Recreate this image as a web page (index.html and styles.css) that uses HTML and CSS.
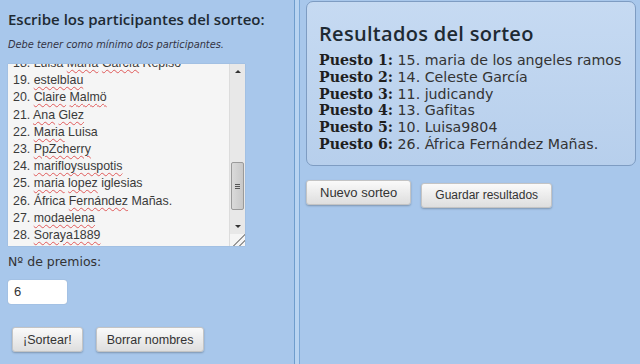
FILE: index.html
```html
<!DOCTYPE html>
<html lang="es">
<head>
<meta charset="utf-8">
<title>Sorteo</title>
<link rel="stylesheet" href="styles.css">
</head>
<body>
<div class="page">
  <div class="left">
    <h2 class="title">Escribe los participantes del sorteo:</h2>
    <p class="hint">Debe tener como mínimo dos participantes.</p>
    <div class="textarea">
      <div class="lines">
        <div class="line">18. Luisa <span class="sp">María</span> <span class="sp">García</span> Repiso</div>
        <div class="line">19. <span class="sp">estelblau</span></div>
        <div class="line">20. <span class="sp">Claire</span> <span class="sp">Malmö</span></div>
        <div class="line">21. <span class="sp">Ana</span> <span class="sp">Glez</span></div>
        <div class="line">22. <span class="sp">Maria</span> Luisa</div>
        <div class="line">23. <span class="sp">PpZcherry</span></div>
        <div class="line">24. <span class="sp">marifloysuspotis</span></div>
        <div class="line">25. <span class="sp">maria</span> <span class="sp">lopez</span> iglesias</div>
        <div class="line">26. África <span class="sp">Fernández</span> Mañas.</div>
        <div class="line">27. <span class="sp">modaelena</span></div>
        <div class="line">28. <span class="sp">Soraya1889</span></div>
      </div>
      <div class="scrollbar">
        <div class="arrow up"></div>
        <div class="track"><div class="thumb"><span class="grip"></span></div></div>
        <div class="arrow down"></div>
        <div class="resize"></div>
      </div>
    </div>
    <p class="label">Nº de premios:</p>
    <div class="input">6</div>
    <div class="buttons left-buttons">
      <button class="btn">¡Sortear!</button>
      <button class="btn">Borrar nombres</button>
    </div>
  </div>
  <div class="divider"></div>
  <div class="right">
    <div class="results">
      <h2 class="res-title">Resultados del sorteo</h2>
      <div class="res-line"><b>Puesto 1:</b> 15. maria de los angeles ramos</div>
      <div class="res-line"><b>Puesto 2:</b> 14. Celeste García</div>
      <div class="res-line"><b>Puesto 3:</b> 11. judicandy</div>
      <div class="res-line"><b>Puesto 4:</b> 13. Gafitas</div>
      <div class="res-line"><b>Puesto 5:</b> 10. Luisa9804</div>
      <div class="res-line"><b>Puesto 6:</b> 26. África Fernández Mañas.</div>
    </div>
    <div class="buttons right-buttons">
      <button class="btn btn-raised">Nuevo sorteo</button>
      <button class="btn btn-small">Guardar resultados</button>
    </div>
  </div>
</div>
</body>
</html>
```

FILE: styles.css
```css
html, body {
  margin: 0;
  padding: 0;
  background: #a8c7eb;
  height: 100%;
  overflow: hidden;
}
.page {
  display: flex;
  height: 364px;
  font-family: "DejaVu Sans", Verdana, sans-serif;
  color: #222;
}
.left {
  width: 286px;
  padding: 8px 0 0 8px;
  flex: none;
}
.title {
  margin: 0;
  font-family: "Open Sans", sans-serif;
  font-weight: 600;
  font-size: 15px;
  line-height: 22px;
  color: #1e2a33;
  white-space: nowrap;
}
.hint {
  margin: 8px 0 0 0;
  font-style: italic;
  font-size: 9.8px;
  line-height: 14px;
  color: #334;
}
.textarea {
  margin-top: 12px;
  width: 237px;
  height: 182px;
  background: #f5f5f5;
  display: flex;
  overflow: hidden;
  box-shadow: 0 0 1px rgba(0,0,0,0.2);
}
.lines {
  flex: 1;
  overflow: hidden;
  padding-left: 5px;
  font-family: "Liberation Sans", Arial, sans-serif;
  font-size: 12.4px;
  line-height: 17.2px;
  color: #3a3a3a;
  white-space: nowrap;
}
.lines .line:first-child {
  margin-top: -9px;
}
.sp {
  text-decoration: underline wavy #e05a5a;
  text-decoration-thickness: 1px;
  text-underline-offset: 2px;
}
.scrollbar {
  width: 15px;
  flex: none;
  display: flex;
  flex-direction: column;
  background: #e8e8e8;
  border-left: 1px solid #dcdcdc;
}
.arrow {
  height: 16px;
  position: relative;
}
.arrow::after {
  content: "";
  position: absolute;
  left: 5px;
  top: 6px;
  border-left: 3px solid transparent;
  border-right: 3px solid transparent;
}
.arrow.up::after { border-bottom: 3px solid #333; }
.arrow.down::after { border-top: 3px solid #333; top: 7px; }
.track {
  flex: 1;
  padding: 82px 1px 0 1px;
}
.thumb {
  height: 46px;
  border: 1px solid #9a9a9a;
  border-radius: 2px;
  background: linear-gradient(to right, #dadada, #c8c8c8);
  display: flex;
  align-items: center;
  justify-content: center;
}
.grip {
  width: 5px;
  height: 5px;
  background: repeating-linear-gradient(to bottom, #555 0 1px, transparent 1px 2px);
}
.resize {
  height: 12px;
  background: #f5f5f5 linear-gradient(135deg, transparent 55%, #999 55% 62%, transparent 62% 75%, #999 75% 82%, transparent 82%);
}
.label {
  margin: 8px 0 0 0;
  font-size: 12.5px;
  line-height: 16px;
  color: #333;
}
.input {
  margin-top: 10px;
  width: 53px;
  height: 24px;
  padding-left: 6px;
  background: #fff;
  border-radius: 3px;
  font-family: "Liberation Sans", Arial, sans-serif;
  font-size: 13px;
  line-height: 24px;
  color: #333;
  box-shadow: 0 0 1px rgba(0,0,0,0.3);
}
.buttons {
  display: flex;
  gap: 13px;
}
.left-buttons {
  margin: 23px 0 0 4px;
}
.btn {
  font-family: "Liberation Sans", Arial, sans-serif;
  font-size: 12.5px;
  color: #333;
  height: 25px;
  padding: 0 10px;
  border: 1px solid #c4c4c4;
  border-radius: 3px;
  background: linear-gradient(to bottom, #fafafa, #dedede);
  box-shadow: 0 1px 2px rgba(0,0,0,0.25);
}
.divider {
  width: 4px;
  flex: none;
  border-left: 1px solid #6f9dcc;
  border-right: 1px solid #7ca8d6;
  background: #b9d4f1;
}
.right {
  flex: 1;
  padding: 1px 4px 0 6px;
}
.results {
  border: 1px solid #7e9cc2;
  border-radius: 7px;
  background: linear-gradient(to bottom, #c6daf2, #b7cfec);
  padding: 20px 12px 12px 12px;
}
.res-title {
  margin: 0 0 6px 0;
  font-family: "Open Sans", sans-serif;
  font-weight: 600;
  font-size: 20px;
  letter-spacing: 0.3px;
  line-height: 24px;
  color: #1e2a33;
}
.res-line {
  font-size: 14.2px;
  line-height: 16.8px;
  color: #333;
  white-space: nowrap;
}
.res-line b {
  font-family: "DejaVu Serif", Georgia, serif;
  color: #1e1e1e;
}
.right-buttons {
  margin-top: 14px;
  gap: 10px;
  align-items: flex-start;
}
.btn-raised {
  font-size: 13px;
  padding: 0 13px;
}
.btn-small {
  font-size: 12px;
  padding: 0 13px;
  margin-top: 3px;
}
```
